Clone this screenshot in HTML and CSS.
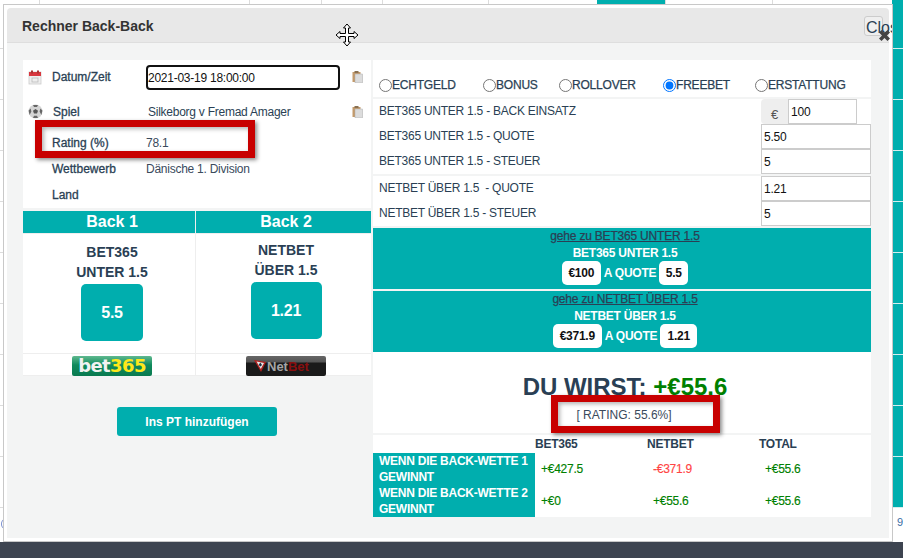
FILE: index.html
```html
<!DOCTYPE html>
<html lang="de">
<head>
<meta charset="utf-8">
<title>Rechner Back-Back</title>
<link rel="stylesheet" href="styles.css">
</head>
<body>
<div class="page">
  <div class="bg-teal-top"></div>
  <div class="bg-teal-right"></div>
  <div class="bg-nine">9</div>
  <div class="bg-arc"></div>
  <div class="footer-bar"></div>

  <div class="modal">
    <div class="modal-head">
      <h4 class="modal-title">Rechner Back-Back</h4>
      <button class="close-btn" type="button">Close</button>
      <svg class="close-x" width="11" height="11" viewBox="0 0 11 11"><path d="M2.5 0 L5.5 3 L8.5 0 L11 2.5 L8 5.5 L11 8.5 L8.5 11 L5.5 8 L2.5 11 L0 8.5 L3 5.5 L0 2.5 Z" fill="#444"/></svg>
    </div>
    <div class="modal-body">
      <div class="col-left">
        <div class="info">
          <svg class="ico" width="14" height="15" viewBox="0 0 14 15"><rect x="1" y="2" width="12" height="12" fill="#eee" stroke="#ccc" stroke-width="0.8"/><rect x="1" y="2" width="12" height="4" fill="#d9363e"/><rect x="3" y="0.5" width="2" height="3" fill="#a33"/><rect x="9" y="0.5" width="2" height="3" fill="#a33"/><rect x="4" y="8" width="6" height="4" fill="none" stroke="#bbb" stroke-width="0.8"/></svg>
          <span class="label">Datum/Zeit</span>
          <input class="date-input" type="text" value="2021-03-19 18:00:00">
          <svg class="ico-clip" width="11" height="12" viewBox="0 0 11 12"><rect x="0.5" y="1" width="8" height="10" fill="#c39a6b"/><rect x="3" y="3" width="7.5" height="9" fill="#dcdcdc" stroke="#aaa" stroke-width="0.5"/><rect x="2.5" y="0" width="4" height="2" fill="#8a7050"/></svg>

          <svg class="ico" width="15" height="15" viewBox="0 0 15 15"><circle cx="7.5" cy="7.5" r="7" fill="#d4d4d4"/><path d="M7.5 5 L10 6.8 L9 9.6 L6 9.6 L5 6.8 Z" fill="#555"/><path d="M5 0.9 L10 0.9 L9 3 L6 3 Z M0.6 6.5 L2.6 4.6 L3.4 7.5 L1.6 11 Z M14.4 6.5 L12.4 4.6 L11.6 7.5 L13.4 11 Z M5 14 L6 11.8 L9 11.8 L10 14 Z" fill="#666"/></svg>
          <span class="label label-spiel">Spiel</span>
          <span class="value value-spiel">Silkeborg v Fremad Amager</span>
          <svg class="ico-clip" width="11" height="12" viewBox="0 0 11 12"><rect x="0.5" y="1" width="8" height="10" fill="#c39a6b"/><rect x="3" y="3" width="7.5" height="9" fill="#dcdcdc" stroke="#aaa" stroke-width="0.5"/><rect x="2.5" y="0" width="4" height="2" fill="#8a7050"/></svg>

          <span></span>
          <span class="label">Rating (%)</span>
          <span class="value">78.1</span>
          <span></span>

          <span></span>
          <span class="label">Wettbewerb</span>
          <span class="value">Dänische 1. Division</span>
          <span></span>

          <span></span>
          <span class="label">Land</span>
          <span></span>
          <span></span>
        </div>

        <div class="backs">
          <div class="back-head back-head-one">Back 1</div>
          <div class="back-head back-head-two">Back 2</div>
          <div class="back-cell back-cell-one">
            <div class="back-name">BET365</div>
            <div class="back-name">UNTER 1.5</div>
            <div class="odd odd-one">5.5</div>
          </div>
          <div class="back-cell back-cell-two">
            <div class="back-name">NETBET</div>
            <div class="back-name">ÜBER 1.5</div>
            <div class="odd odd-two">1.21</div>
          </div>
          <div class="logo-cell logo-cell-one"><span class="logo logo-b365">bet<b>365</b></span></div>
          <div class="logo-cell logo-cell-two"><span class="logo logo-net"><svg class="net-mark" width="12" height="14" viewBox="0 0 12 14"><path d="M0 1 L12 3 L7 13 Z" fill="#b02020"/><path d="M2.5 2.5 L10 4 L6.8 10 Z" fill="#e8e8e8"/><path d="M6.3 3.5 L8 6 L6.5 7.5 L4.6 6 Z" fill="#1a2f44"/></svg>Net<b>Bet</b></span></div>
        </div>

        <div class="add-row"><button class="add-btn" type="button">Ins PT hinzufügen</button></div>
      </div>

      <div class="col-right">
        <div class="radios">
          <label class="radio r1"><input type="radio" name="t">ECHTGELD</label>
          <label class="radio r2"><input type="radio" name="t">BONUS</label>
          <label class="radio r3"><input type="radio" name="t">ROLLOVER</label>
          <label class="radio r4"><input type="radio" name="t" checked>FREEBET</label>
          <label class="radio r5"><input type="radio" name="t">ERSTATTUNG</label>
        </div>

        <div class="form-block">
          <span class="f-label">BET365 UNTER 1.5 - BACK EINSATZ</span>
          <div class="stake"><span class="euro">€</span><input class="f-input stake-input" type="text" value="100"></div>
          <span class="f-label">BET365 UNTER 1.5 - QUOTE</span>
          <input class="f-input" type="text" value="5.50">
          <span class="f-label">BET365 UNTER 1.5 - STEUER</span>
          <input class="f-input" type="text" value="5">
        </div>
        <div class="form-block">
          <span class="f-label">NETBET ÜBER 1.5 &nbsp;- QUOTE</span>
          <input class="f-input" type="text" value="1.21">
          <span class="f-label">NETBET ÜBER 1.5 - STEUER</span>
          <input class="f-input" type="text" value="5">
        </div>

        <div class="bet-box">
          <a class="bet-link" href="#">gehe zu BET365 UNTER 1.5</a>
          <div class="bet-title">BET365 UNTER 1.5</div>
          <div class="bet-line"><span class="pill pill-a">€100</span>A QUOTE<span class="pill pill-b">5.5</span></div>
        </div>
        <div class="bet-box">
          <a class="bet-link" href="#">gehe zu NETBET ÜBER 1.5</a>
          <div class="bet-title">NETBET ÜBER 1.5</div>
          <div class="bet-line"><span class="pill pill-c">€371.9</span>A QUOTE<span class="pill pill-d">1.21</span></div>
        </div>

        <div class="result">
          <div class="result-main">DU WIRST: <span class="pos">+€55.6</span></div>
          <div class="result-rating">[ RATING: 55.6%]</div>
        </div>

        <div class="summary">
          <span></span><span class="s-head">BET365</span><span class="s-head">NETBET</span><span class="s-head">TOTAL</span>
          <span class="s-label">WENN DIE BACK-WETTE 1 GEWINNT</span><span class="s-val pos">+€427.5</span><span class="s-val neg">-€371.9</span><span class="s-val pos">+€55.6</span>
          <span class="s-label">WENN DIE BACK-WETTE 2 GEWINNT</span><span class="s-val pos">+€0</span><span class="s-val pos">+€55.6</span><span class="s-val pos">+€55.6</span>
        </div>
      </div>
    </div>

    <div class="mark mark-one"></div>
    <div class="mark mark-two"></div>
    <svg class="move-cursor" width="24" height="24" viewBox="0 0 24 24"><path d="M12 1 L15.5 5 L13.5 5 L13.5 10.5 L19 10.5 L19 8.5 L23 12 L19 15.5 L19 13.5 L13.5 13.5 L13.5 19 L15.5 19 L12 23 L8.5 19 L10.5 19 L10.5 13.5 L5 13.5 L5 15.5 L1 12 L5 8.5 L5 10.5 L10.5 10.5 L10.5 5 L8.5 5 Z" fill="#fff" stroke="#000" stroke-width="1"/></svg>
  </div>
</div>
</body>
</html>
```

FILE: styles.css
```css
* { box-sizing: border-box; }
html, body { margin: 0; padding: 0; }
body {
  font-family: "Liberation Sans", Arial, sans-serif;
  font-size: 12px;
  letter-spacing: -0.25px;
  color: #2a3f54;
}
.page {
  position: relative;
  width: 903px;
  height: 558px;
  overflow: hidden;
  background-color: #fff;
  background-image:
    linear-gradient(#dcdcdc, #dcdcdc),
    linear-gradient(#dcdcdc, #dcdcdc),
    linear-gradient(#dcdcdc, #dcdcdc),
    linear-gradient(#dcdcdc, #dcdcdc),
    linear-gradient(#dcdcdc, #dcdcdc),
    linear-gradient(#dcdcdc, #dcdcdc),
    linear-gradient(#dcdcdc, #dcdcdc),
    linear-gradient(#dcdcdc 1px, transparent 1px);
  background-repeat: no-repeat, no-repeat, no-repeat, no-repeat, no-repeat, no-repeat, no-repeat, repeat-y;
  background-size: 1px 5px, 1px 5px, 1px 5px, 1px 5px, 1px 5px, 1px 5px, 1px 5px, 100% 51px;
  background-position: 39px 0, 249px 0, 321px 0, 382px 0, 488px 0, 665px 0, 772px 0, 0 48px;
}
.bg-teal-top { position: absolute; left: 597px; top: 0; width: 68px; height: 5px; background: #00aeae; }
.bg-teal-right {
  position: absolute; left: 892px; top: 0; width: 11px; height: 508px;
  background-color: #00aeae;
  background-image: linear-gradient(#d5eeee 1px, transparent 1px);
  background-size: 100% 51px;
  background-position: 0 48px;
}
.bg-nine { position: absolute; left: 897px; top: 516px; font-size: 11px; color: #3a6ea5; }
.bg-arc { position: absolute; left: 1px; top: 519px; width: 8px; height: 10px; border: 1px solid #7a8fd0; border-radius: 50%; }
.footer-bar { position: absolute; left: 0; right: 0; top: 542px; bottom: 0; background: #3d4450; }

.modal {
  position: absolute;
  left: 3px;
  top: 4px;
  width: 890px;
  height: 538px;
  background: #fff;
  border: 1px solid #c8c8c8;
  padding: 3px;
  overflow: hidden;
}
.modal-head {
  position: relative;
  height: 35px;
  background: #e8e8e8;
  border-bottom: 1px solid #dedede;
  border-radius: 4px 4px 0 0;
  padding-left: 15px;
  display: flex;
  align-items: center;
}
.modal-title { margin: 2px 0 0; font-size: 14px; font-weight: bold; color: #333; letter-spacing: 0; }
.close-btn {
  position: absolute;
  left: 857px;
  top: 8px;
  width: 19px;
  height: 20px;
  padding: 2px 0 0 1px;
  font-family: "Liberation Sans", sans-serif;
  font-size: 16px;
  line-height: 18px;
  color: #2a3f54;
  background: #efefef;
  border: 1px solid #ccc;
  border-radius: 3px;
  text-align: left;
  white-space: nowrap;
  overflow: visible;
}
.close-x { position: absolute; left: 872px; top: 22px; }

.modal-body {
  height: 495px;
  background: #f3f4f4;
  padding: 17px 18px 0 16px;
  display: flex;
  gap: 2px;
  align-items: flex-start;
}
.col-left { width: 348px; flex: none; }
.col-right { width: 498px; flex: none; }

.info {
  display: grid;
  grid-template-columns: 24px 94px 193px 1fr;
  grid-template-rows: 34px 35px 27px 26px 26px;
  align-items: center;
  background: #fff;
  height: 148px;
  padding-left: 5px;
}
.ico { display: block; }
.label { letter-spacing: 0; -webkit-text-stroke: 0.3px #2a3f54; }
.label-spiel { padding-left: 1px; }
.value { color: #3a4a5c; }
.value-spiel { color: #2a3f54; padding-left: 2px; }
.date-input {
  width: 194px;
  height: 25px;
  margin-top: 1px;
  padding: 0;
  border: 2px solid #111;
  border-radius: 4px;
  font: 12px "Liberation Sans", sans-serif;
  letter-spacing: -0.25px;
  color: #111;
  outline: none;
}
.ico-clip { margin-left: 13px; display: block; }

.backs {
  margin-top: 3px;
  display: grid;
  grid-template-columns: 173px 175px;
  grid-template-rows: 22px 120px 23px;
  background: #fff;
}
.back-head {
  background: #00aeae;
  color: #fff;
  font-size: 16px;
  font-weight: bold;
  letter-spacing: 0;
  text-align: center;
  line-height: 22px;
}
.back-head-one { padding-left: 6px; border-right: 1px solid #eee; }
.back-head-two { padding-left: 5px; }
.back-cell {
  border-top: 1px solid #eee;
  text-align: center;
}
.back-cell-one { padding: 8px 0 0 6px; border-right: 1px solid #eee; }
.back-cell-two { padding: 6px 0 0 5px; }
.back-name {
  font-size: 14px;
  font-weight: bold;
  letter-spacing: 0;
  line-height: 20px;
}
.odd {
  margin: 2px auto 0;
  background: #00aeae;
  color: #fff;
  font-size: 16px;
  font-weight: bold;
  height: 57px;
  line-height: 57px;
  border-radius: 5px;
}
.odd-one { width: 62px; }
.odd-two { width: 71px; }
.logo-cell {
  border-top: 1px solid #eee;
  border-bottom: 1px solid #eee;
  display: flex;
  justify-content: center;
  align-items: flex-start;
  padding-top: 2px;
}
.logo-cell-one { border-right: 1px solid #eee; padding-left: 6px; }
.logo-cell-two { padding-left: 5px; }
.logo {
  display: block;
  width: 80px;
  height: 20px;
  border-radius: 2px;
  text-align: center;
  font-weight: bold;
  line-height: 19px;
}
.logo-b365 {
  background: linear-gradient(#5fb98f, #0f8a5c 45%, #0a7a50);
  color: #f2f2f2;
  font-size: 18px;
  font-family: "DejaVu Sans", sans-serif;
  letter-spacing: -0.6px;
}
.logo-b365 b { color: #ffe81a; }
.logo-net {
  display: flex;
  align-items: center;
  background: linear-gradient(#666, #555 30%, #1a1a1a 35%, #1a1a1a);
  color: #a5a5a5;
  font-size: 13px;
  letter-spacing: 0;
  padding-left: 8px;
}
.logo-net b { color: #8a0f0f; }
.net-mark { margin-right: 1px; }

.add-row { display: flex; justify-content: center; padding-top: 31px; }
.add-btn {
  width: 160px;
  height: 29px;
  background: #00aeae;
  color: #fff;
  border: 0;
  border-radius: 3px;
  font: bold 12px "Liberation Sans", sans-serif;
}

.radios {
  height: 37px;
  background: #fff;
  display: flex;
  align-items: flex-end;
  padding: 0 0 5px 6px;
  margin-bottom: 2px;
}
.radio {
  display: flex;
  align-items: center;
  -webkit-text-stroke: 0.25px #2a3f54;
  letter-spacing: -0.2px;
}
.radio input { margin: 0; width: 13px; height: 13px; accent-color: #0075ff; }
.r1 { width: 104px; }
.r2 { width: 76px; }
.r3 { width: 104px; }
.r4 { width: 92px; }

.form-block {
  display: grid;
  grid-template-columns: 388px 110px;
  grid-auto-rows: 25px;
  background: #fff;
  margin-bottom: 2px;
  align-items: center;
}
.f-label { padding-left: 6px; padding-bottom: 1px; }
.f-input {
  width: 110px;
  height: 25px;
  border: 1px solid #ccc;
  padding: 0 2px;
  font: 12px "Liberation Sans", sans-serif;
  letter-spacing: -0.2px;
  color: #111;
  border-radius: 0;
  outline: none;
}
.stake { display: flex; height: 25px; }
.euro {
  width: 27px;
  background: #eee;
  border-radius: 4px 0 0 4px;
  font-size: 13px;
  text-align: center;
  line-height: 32px;
  color: #555;
}
.stake-input { width: 69px; }

.bet-box {
  background: #00aeae;
  height: 61px;
  margin-bottom: 2px;
  text-align: center;
  color: #fff;
  font-weight: bold;
  padding: 1px 0 0 6px;
}
.bet-link { display: block; color: #2a3f54; font-weight: normal; line-height: 15px; letter-spacing: -0.2px; -webkit-text-stroke: 0.25px #2a3f54; }
.bet-title { line-height: 16px; margin-top: 1px; }
.bet-line { display: flex; justify-content: center; align-items: center; height: 24px; gap: 3px; }
.pill {
  background: #fff;
  color: #111;
  border-radius: 5px;
  height: 24px;
  line-height: 24px;
  text-align: center;
}
.pill-a { width: 39px; }
.pill-b { width: 29px; }
.pill-c { width: 49px; }
.pill-d { width: 37px; }

.result {
  height: 81px;
  margin-top: -2px;
  margin-bottom: 2px;
  background: #fff;
  text-align: center;
  padding: 21px 0 0 6px;
}
.result-main { font-size: 24px; font-weight: bold; letter-spacing: 0; line-height: 28px; }
.pos { color: #008000; }
.neg { color: #f44; }
.result-rating { margin: 6px 2px 0 0; letter-spacing: 0; line-height: 16px; color: #3a4a5c; }

.summary {
  display: grid;
  grid-template-columns: 162px 112px 112px 112px;
  grid-template-rows: 18px 32px 32px;
  background: #fff;
  align-items: center;
}
.s-head { font-weight: bold; color: #2a3f54; }
.s-label {
  background: #00aeae;
  color: #fff;
  font-weight: bold;
  line-height: 16px;
  height: 32px;
  padding-left: 6px;
}
.s-val { padding-left: 6px; -webkit-text-stroke: 0.15px currentColor; }

.mark {
  position: absolute;
  border: 7px solid #c80000;
  box-shadow: 2px 2px 4px rgba(0,0,0,.45), inset 2px 2px 4px rgba(0,0,0,.3);
}
.mark-one { left: 31px; top: 115px; width: 220px; height: 38px; }
.mark-two { left: 547px; top: 390px; width: 169px; height: 38px; }
.move-cursor { position: absolute; left: 331px; top: 18px; }
```
